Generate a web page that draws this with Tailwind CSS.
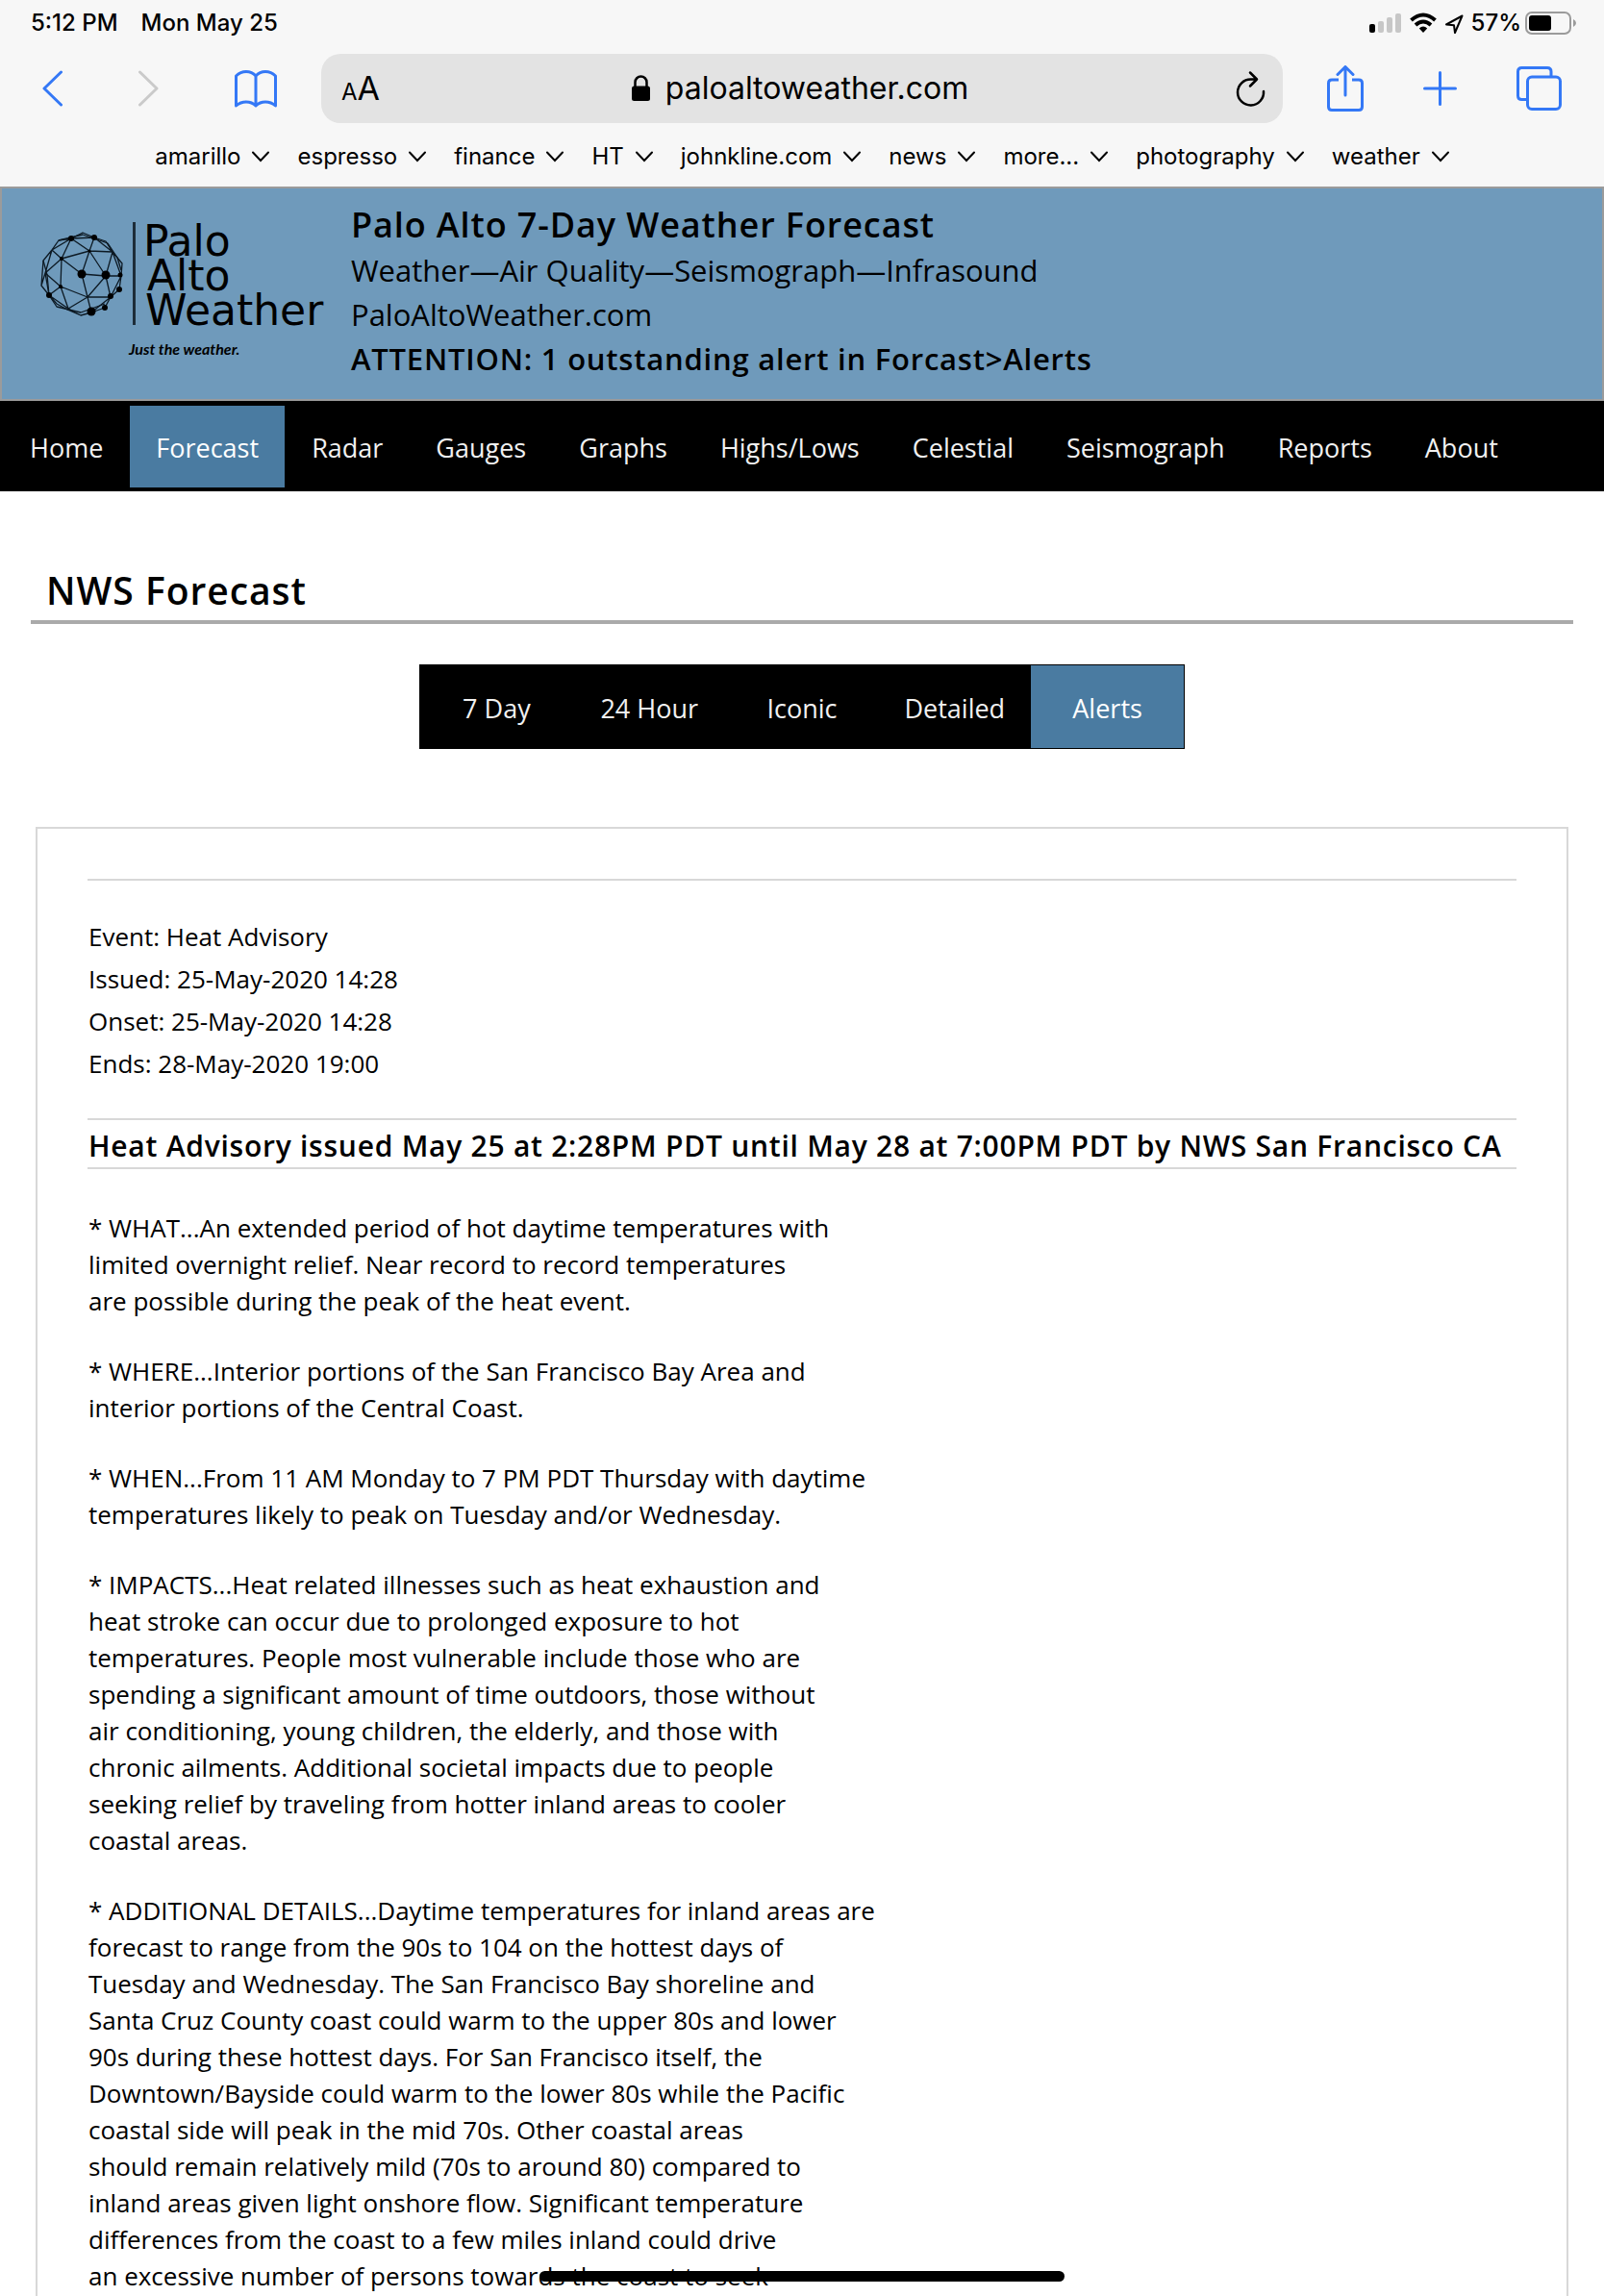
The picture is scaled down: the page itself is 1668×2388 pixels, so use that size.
<!DOCTYPE html>
<html lang="en">
<head>
<meta charset="utf-8">
<meta name="viewport" content="width=device-width, initial-scale=1">
<title>Palo Alto 7-Day Weather Forecast</title>
<script src="https://cdn.jsdelivr.net/npm/@tailwindcss/browser@4"></script>
</head>
<body class="h-screen overflow-hidden flex flex-col bg-white text-black font-['Open_Sans',sans-serif]">

<!-- Browser chrome -->
<div class="bg-[#f7f7f7] font-[Inter,sans-serif] shrink-0">
  <div class="flex h-12 items-center justify-between pl-8 pr-7 text-[24px] font-medium">
    <div class="flex gap-6"><span>5:12 PM</span><span>Mon May 25</span></div>
    <div class="flex items-center gap-2">
      <svg class="h-6 w-[34px]" viewBox="0 0 34 24" aria-label="Signal"><rect x="0" y="13" width="6" height="9" rx="2"/><g fill="#c7c7c7"><rect x="9" y="10" width="6" height="12" rx="2"/><rect x="18" y="6" width="6" height="16" rx="2"/><rect x="27" y="2" width="6" height="20" rx="2"/></g></svg>
      <svg class="h-6 w-7" viewBox="0 0 28 24" fill="none" stroke="#000" stroke-width="4" aria-label="Wi-Fi"><path d="M1.500 9Q14-2 26.500 9M6 14Q14 7 22 14"/><path d="M14 22l-4.200-4.500Q14 13.500 18.200 17.500z" fill="#000" stroke="none"/></svg>
      <svg class="h-6 w-5" viewBox="0 0 20 24" fill="none" stroke="#000" stroke-width="2" stroke-linejoin="round" aria-label="Location"><path d="M18.500 4.500L2 13.500l8 .8 1 7.700z"/></svg>
      <div class="flex items-center gap-1"><span>57%</span>
      <svg class="h-6 w-[54px]" viewBox="0 0 54 24" aria-label="Battery"><rect x="1" y="1" width="46" height="22" rx="6" fill="none" stroke="#9b9b9b" stroke-width="2"/><rect x="4" y="4" width="23" height="16" rx="3"/><path d="M50 8q3 1.500 3 4t-3 4z" fill="#9b9b9b"/></svg></div>
    </div>
  </div>
  <div class="flex h-[88px] items-center px-11">
    <button aria-label="Back"><svg class="block h-10 w-[21px]" viewBox="0 0 21 40" fill="none" stroke="#3478f6" stroke-width="3" stroke-linecap="round" stroke-linejoin="round"><path d="M19.500 3L2 20l17.500 17"/></svg></button>
    <button aria-label="Forward" class="ml-[79px]"><svg class="block h-10 w-[21px]" viewBox="0 0 21 40" fill="none" stroke="#cacaca" stroke-width="3" stroke-linecap="round" stroke-linejoin="round"><path d="M1.500 3L19 20 1.500 37"/></svg></button>
    <button aria-label="Bookmarks" class="ml-[79px]"><svg class="block h-10 w-11" viewBox="0 0 44 40" fill="none" stroke="#3478f6" stroke-width="3" stroke-linejoin="round"><path d="M22 7Q18 2.500 12 2.500T1.500 7V38Q6 34 12 34T22 38Q26 34 32 34T42.500 38V7Q38 2.500 32 2.500T22 7V38"/></svg></button>
    <div class="ml-[46px] flex h-[72px] flex-1 items-center justify-between rounded-[20px] bg-[#e3e3e3] pl-[21px] pr-[18px]">
      <button aria-label="Reader options" class="w-10 text-left leading-none"><span class="text-[24px]">A</span><span class="text-[34px]">A</span></button>
      <div class="flex items-center gap-4">
        <svg class="h-7 w-[19px]" viewBox="0 0 19 28"><path d="M3.500 12V7.500a6 6 0 0 1 12 0V12" fill="none" stroke="#000" stroke-width="2.500"/><rect x="0" y="11.500" width="19" height="15.500" rx="2.500"/></svg>
        <span class="text-[32px] leading-10">paloaltoweather.com</span>
      </div>
      <button aria-label="Reload" class="pl-4"><svg class="block h-10 w-[31px]" viewBox="0 -2 31 40" fill="none" stroke="#000" stroke-width="2.500" stroke-linecap="round" stroke-linejoin="round"><path d="M22 8.500H16A13.500 13.500 0 1 0 29 21M15 1.500l7 7-7 7"/></svg></button>
    </div>
    <button aria-label="Share" class="ml-[46px]"><svg class="block h-12 w-[38px]" viewBox="0 0 38 48" fill="none" stroke="#3478f6" stroke-width="3" stroke-linecap="round" stroke-linejoin="round"><path d="M12 15H5q-3.500 0-3.500 3.500V43q0 3.500 3.500 3.500H33q3.500 0 3.500-3.500V18.500Q36.500 15 33 15H26" stroke-linecap="butt"/><path d="M19 31V2M11 9.500L19 1.500l8 8"/></svg></button>
    <button aria-label="New tab" class="ml-[62px]"><svg class="block h-9 w-[35px]" viewBox="0 0 35 36" stroke="#3478f6" stroke-width="3" stroke-linecap="round"><path d="M17.500 1.500V34.500M1.500 18H33.500"/></svg></button>
    <button aria-label="Tabs" class="ml-[62px]"><svg class="block h-[46px] w-[47px]" viewBox="0 0 47 46" fill="none" stroke="#3478f6" stroke-width="3"><path d="M11.500 34.500H5.500q-4 0-4-4V5.500q0-4 4-4H32q4 0 4 4V11"/><rect x="11.500" y="11" width="34" height="33.500" rx="4.500"/></svg></button>
  </div>
  <nav aria-label="Favorites" class="flex h-[58px] items-center justify-center gap-[29px] pb-[4px] text-[24px]">
    <button class="flex items-center gap-3">amarillo<svg class="h-3 w-[18px]" viewBox="0 0 18 12" fill="none" stroke="#000" stroke-width="2" stroke-linecap="round"><path d="M1 1.500l8 8.500 8-8.500"/></svg></button>
    <button class="flex items-center gap-3">espresso<svg class="h-3 w-[18px]" viewBox="0 0 18 12" fill="none" stroke="#000" stroke-width="2" stroke-linecap="round"><path d="M1 1.500l8 8.500 8-8.500"/></svg></button>
    <button class="flex items-center gap-3">finance<svg class="h-3 w-[18px]" viewBox="0 0 18 12" fill="none" stroke="#000" stroke-width="2" stroke-linecap="round"><path d="M1 1.500l8 8.500 8-8.500"/></svg></button>
    <button class="flex items-center gap-3">HT<svg class="h-3 w-[18px]" viewBox="0 0 18 12" fill="none" stroke="#000" stroke-width="2" stroke-linecap="round"><path d="M1 1.500l8 8.500 8-8.500"/></svg></button>
    <button class="flex items-center gap-3">johnkline.com<svg class="h-3 w-[18px]" viewBox="0 0 18 12" fill="none" stroke="#000" stroke-width="2" stroke-linecap="round"><path d="M1 1.500l8 8.500 8-8.500"/></svg></button>
    <button class="flex items-center gap-3">news<svg class="h-3 w-[18px]" viewBox="0 0 18 12" fill="none" stroke="#000" stroke-width="2" stroke-linecap="round"><path d="M1 1.500l8 8.500 8-8.500"/></svg></button>
    <button class="flex items-center gap-3">more...<svg class="h-3 w-[18px]" viewBox="0 0 18 12" fill="none" stroke="#000" stroke-width="2" stroke-linecap="round"><path d="M1 1.500l8 8.500 8-8.500"/></svg></button>
    <button class="flex items-center gap-3">photography<svg class="h-3 w-[18px]" viewBox="0 0 18 12" fill="none" stroke="#000" stroke-width="2" stroke-linecap="round"><path d="M1 1.500l8 8.500 8-8.500"/></svg></button>
    <button class="flex items-center gap-3">weather<svg class="h-3 w-[18px]" viewBox="0 0 18 12" fill="none" stroke="#000" stroke-width="2" stroke-linecap="round"><path d="M1 1.500l8 8.500 8-8.500"/></svg></button>
  </nav>
</div>

<!-- Site header -->
<header class="flex h-[223px] shrink-0 items-start border-2 border-[#9b9b9b] bg-[#6f9abb] pl-9 pt-[13px]">
  <svg class="mt-2 h-[170px] w-[327px] shrink-0" viewBox="38 216 327 170" role="img" aria-label="Palo Alto Weather logo">
    <g fill="none" stroke="#0d1a24" stroke-width="1.300" stroke-linejoin="round">
      <path d="M86 241L98 246 110 250 117 261 127 273 126 286 124 300 115 308 109 319 95 324 84 327 70 321 59 315 51 306 43 296 45 270 54 259 61 249 74 247zM74 247L98 246M54 259L74 247 93 260 98 246M117 261L93 260 64 268 54 259M74 247L64 268 47 283 54 259M64 268L85 284 93 260 110 286 85 284M64 268L63 297M63 297L47 283 51 306 63 297 71 320M63 297L91 308 85 284M91 308L110 286 115 308 91 308 71 320M91 308L95 324M110 286L117 261 126 286 110 286M117 261L98 246M126 286L115 308 95 324M127 273L117 261M47 283L43 296M51 306L71 320 84 327"/>
      <path d="M61 249L86 243 112 252 122 267 126 280M45 270L49 285 51 306 59 318 84 324 109 315"/>
    </g>
    <g><circle cx="74" cy="247" r="3"/><circle cx="98" cy="246" r="3"/><circle cx="85" cy="284" r="4.500"/><circle cx="110" cy="285" r="4.500"/><circle cx="125" cy="285" r="2.500"/><circle cx="124" cy="300" r="3"/><circle cx="115" cy="307" r="3"/><circle cx="109" cy="319" r="3"/><circle cx="95" cy="323" r="4.500"/><circle cx="51" cy="306" r="3"/><circle cx="64" cy="268" r="2"/><circle cx="63" cy="297" r="2"/><circle cx="93" cy="260" r="1.500"/></g>
    <rect x="138" y="230" width="3" height="107" fill="#1d2d39"/>
    <g class="font-['DejaVu_Sans',sans-serif]" font-size="44"><text x="149" y="265">Palo</text><text x="153" y="301">Alto</text><text x="151" y="337">Weather</text></g>
    <text class="font-[Lato,cursive] font-bold italic" x="134" y="368" font-size="16">Just the weather.</text>
  </svg>
  <div class="text-[31px] leading-[46px] whitespace-nowrap">
    <h1 class="text-[36px] leading-[49px] font-semibold tracking-wide">Palo Alto 7-Day Weather Forecast</h1>
    <p>Weather—Air Quality—Seismograph—Infrasound</p>
    <p>PaloAltoWeather.com</p>
    <p class="font-semibold tracking-wide">ATTENTION: 1 outstanding alert in Forcast&gt;Alerts</p>
  </div>
</header>

<nav aria-label="Site" class="flex h-[94px] shrink-0 items-center gap-px bg-black px-1 text-[27px] text-[#f1f1f1]">
  <a href="#" class="flex h-[85px] items-center px-[27px] pt-[4px]">Home</a>
  <a href="#" class="flex h-[85px] items-center bg-[#4a7ba1] px-[27px] pt-[4px] text-white">Forecast</a>
  <a href="#" class="flex h-[85px] items-center px-[27px] pt-[4px]">Radar</a>
  <a href="#" class="flex h-[85px] items-center px-[27px] pt-[4px]">Gauges</a>
  <a href="#" class="flex h-[85px] items-center px-[27px] pt-[4px]">Graphs</a>
  <a href="#" class="flex h-[85px] items-center px-[27px] pt-[4px]">Highs/Lows</a>
  <a href="#" class="flex h-[85px] items-center px-[27px] pt-[4px]">Celestial</a>
  <a href="#" class="flex h-[85px] items-center px-[27px] pt-[4px]">Seismograph</a>
  <a href="#" class="flex h-[85px] items-center px-[27px] pt-[4px]">Reports</a>
  <a href="#" class="flex h-[85px] items-center px-[27px] pt-[4px]">About</a>
</nav>

<main class="flex min-h-0 flex-1 flex-col">
  <h2 class="mx-8 mt-[72px] border-b-4 border-[#aaa] px-4 text-[39px] leading-[62px] font-semibold tracking-wide">NWS Forecast</h2>
  <nav aria-label="Forecast views" class="mx-auto mt-[42px] grid h-[88px] w-[796px] shrink-0 grid-cols-5 border border-black bg-black text-[27px] text-[#f1f1f1]">
    <a href="#" class="flex items-center justify-center pt-[4px]">7 Day</a>
    <a href="#" class="flex items-center justify-center pt-[4px]">24 Hour</a>
    <a href="#" class="flex items-center justify-center pt-[4px]">Iconic</a>
    <a href="#" class="flex items-center justify-center pt-[4px]">Detailed</a>
    <a href="#" class="flex items-center justify-center bg-[#4a7ba1] pt-[4px] text-white">Alerts</a>
  </nav>

  <article class="mx-[37px] mt-[81px] min-h-0 flex-1 overflow-hidden border-2 border-b-0 border-[#d8d8d8] px-[52px] pt-[52px] text-[26px]">
    <div class="border-y-2 border-[#d8d8d8] pt-[36px] pb-[35px] pl-px leading-[44px]">
      <p>Event: Heat Advisory</p>
      <p>Issued: 25-May-2020 14:28</p>
      <p>Onset: 25-May-2020 14:28</p>
      <p>Ends: 28-May-2020 19:00</p>
    </div>
    <h3 class="border-b-2 border-[#d8d8d8] pt-[5px] pl-px text-[30px] leading-[44px] font-semibold tracking-wide whitespace-nowrap">Heat Advisory issued May 25 at 2:28PM PDT until May 28 at 7:00PM PDT by NWS San Francisco CA</h3>
    <div class="flex flex-col gap-[35px] pt-[42px] pl-px leading-[38px] whitespace-nowrap">
      <p>* WHAT...An extended period of hot daytime temperatures with<br>limited overnight relief. Near record to record temperatures<br>are possible during the peak of the heat event.</p>
      <p>* WHERE...Interior portions of the San Francisco Bay Area and<br>interior portions of the Central Coast.</p>
      <p>* WHEN...From 11 AM Monday to 7 PM PDT Thursday with daytime<br>temperatures likely to peak on Tuesday and/or Wednesday.</p>
      <p>* IMPACTS...Heat related illnesses such as heat exhaustion and<br>heat stroke can occur due to prolonged exposure to hot<br>temperatures. People most vulnerable include those who are<br>spending a significant amount of time outdoors, those without<br>air conditioning, young children, the elderly, and those with<br>chronic ailments. Additional societal impacts due to people<br>seeking relief by traveling from hotter inland areas to cooler<br>coastal areas.</p>
      <p>* ADDITIONAL DETAILS...Daytime temperatures for inland areas are<br>forecast to range from the 90s to 104 on the hottest days of<br>Tuesday and Wednesday. The San Francisco Bay shoreline and<br>Santa Cruz County coast could warm to the upper 80s and lower<br>90s during these hottest days. For San Francisco itself, the<br>Downtown/Bayside could warm to the lower 80s while the Pacific<br>coastal side will peak in the mid 70s. Other coastal areas<br>should remain relatively mild (70s to around 80) compared to<br>inland areas given light onshore flow. Significant temperature<br>differences from the coast to a few miles inland could drive<br>an excessive number of persons towards the coast to seek</p>
    </div>
  </article>
</main>

<!-- Home indicator -->
<div class="fixed bottom-[15px] left-1/2 h-[11px] w-[546px] -translate-x-1/2 rounded-full bg-black"></div>
</body>
</html>
